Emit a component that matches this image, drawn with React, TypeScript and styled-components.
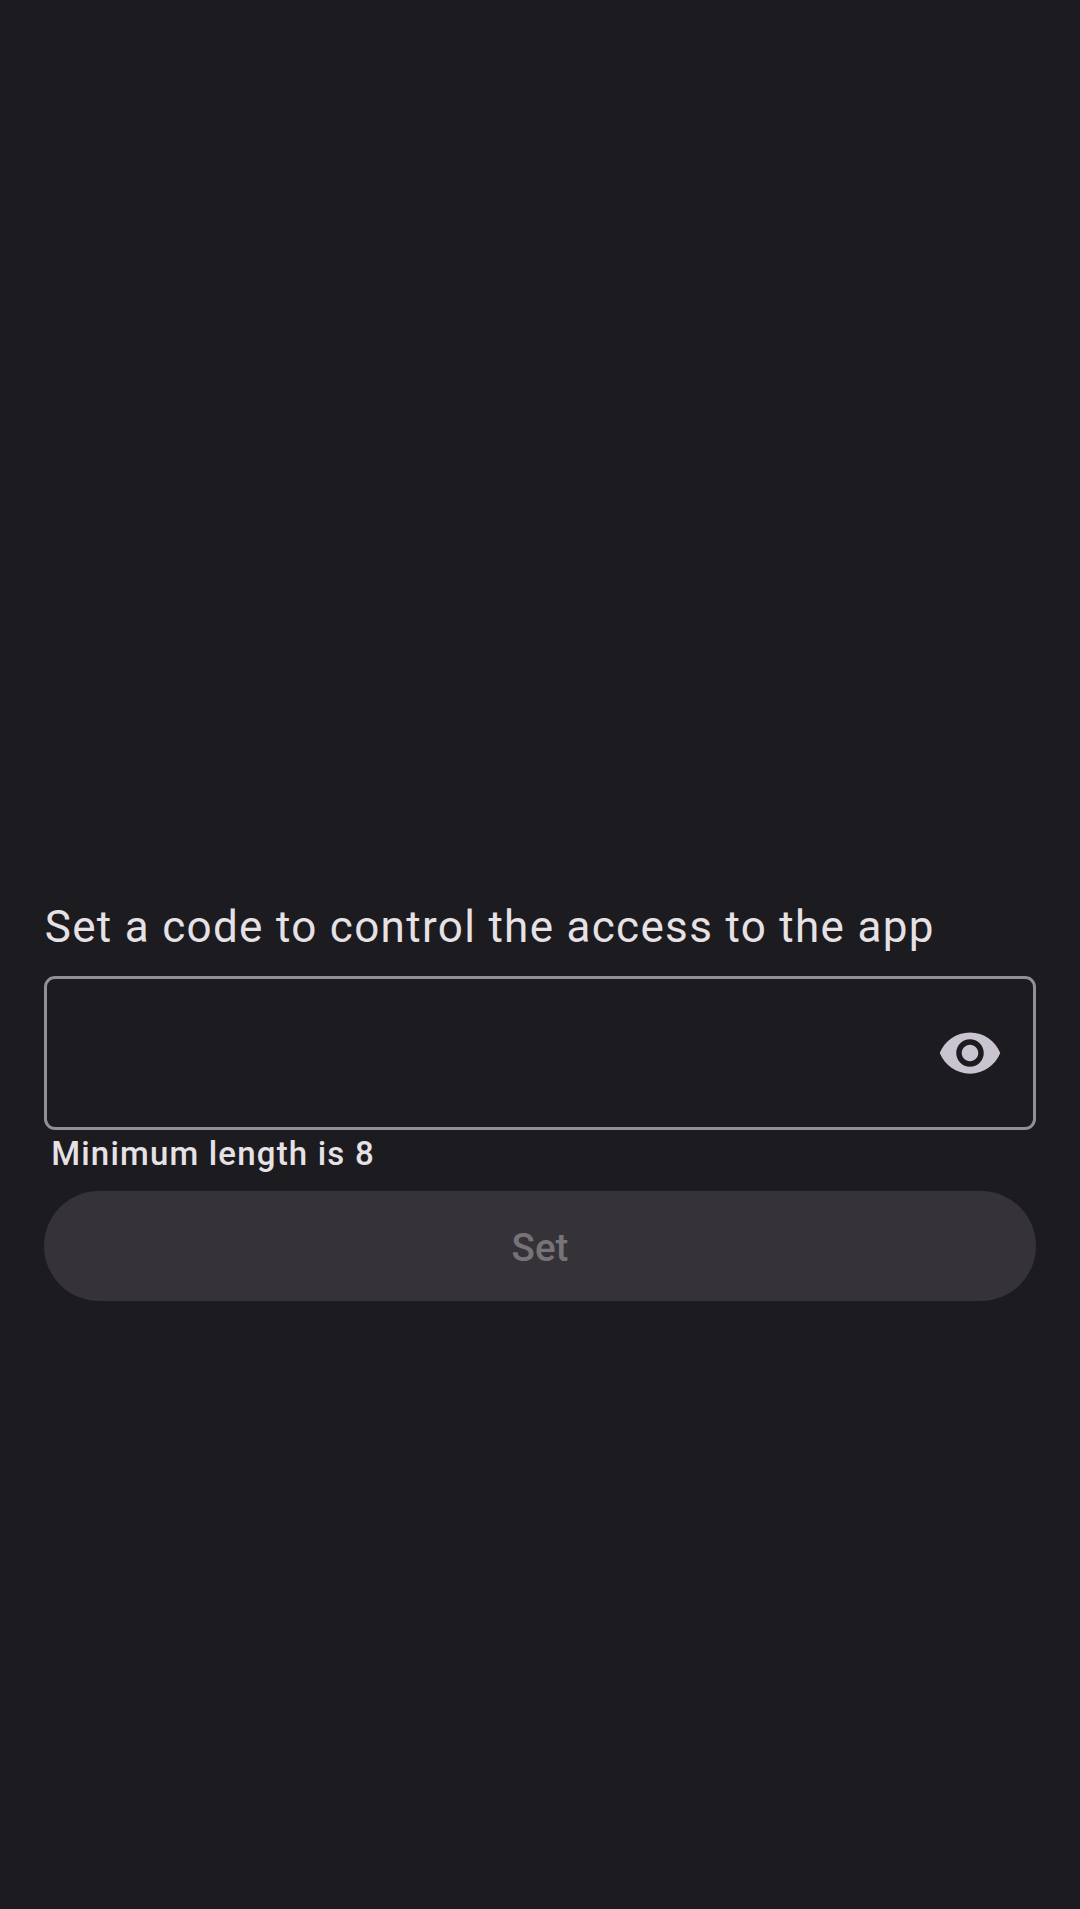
import React, { useState } from "react";
import styled, { createGlobalStyle } from "styled-components";

const GlobalStyle = createGlobalStyle`
  * { box-sizing: border-box; }
  body { margin: 0; background: #1c1b1f; }
`;

const Screen = styled.main`
  min-height: 1909px;
  padding: 900px 44px 0;
  display: flex;
  flex-direction: column;
  background: #1c1b1f;
  color: #e6e1e5;
  font-family: Roboto, sans-serif;
`;

const Title = styled.label`
  height: 76px;
  padding-left: 0.7px;
  font-size: 44px;
  line-height: 54px;
  letter-spacing: 1.315px;
  white-space: nowrap;
`;

const Field = styled.div`
  display: flex;
  align-items: center;
  height: 154px;
  padding-right: 30px;
  border: 3px solid #938f99;
  border-radius: 11px;
`;

const Input = styled.input`
  flex: 1;
  min-width: 0;
  height: 100%;
  padding: 0 41px;
  border: 0;
  outline: 0;
  background: transparent;
  color: inherit;
  font: 400 44px Roboto, sans-serif;
`;

const Toggle = styled.button`
  display: flex;
  padding: 0;
  border: 0;
  background: none;
  color: #cac4d0;
`;

const Hint = styled.p`
  height: 61px;
  margin: 0;
  padding: 2px 0 0 7.2px;
  font-size: 33px;
  font-weight: 500;
  line-height: 44px;
  letter-spacing: 1.185px;
`;

const SubmitButton = styled.button`
  height: 110px;
  padding: 2px 0 0;
  border: 0;
  border-radius: 55px;
  background: #353337;
  color: #777479;
  font: 500 38.5px Roboto, sans-serif;
  letter-spacing: 0;
`;

export default function App() {
  const [visible, setVisible] = useState(false);
  return (
    <>
      <GlobalStyle />
      <Screen>
        <Title htmlFor="code">Set a code to control the access to the app</Title>
        <Field>
          <Input id="code" type={visible ? "text" : "password"} />
          <Toggle type="button" onClick={() => setVisible(!visible)}>
            <svg width="66" height="66" viewBox="0 0 24 24" fill="currentColor">
              <path d="M12 4.5C7 4.5 2.73 7.61 1 12c1.73 4.39 6 7.5 11 7.5s9.27-3.11 11-7.5c-1.73-4.39-6-7.5-11-7.5zM12 17c-2.76 0-5-2.24-5-5s2.24-5 5-5 5 2.24 5 5-2.24 5-5 5zm0-8c-1.66 0-3 1.34-3 3s1.34 3 3 3 3-1.34 3-3-1.34-3-3-3z" />
            </svg>
          </Toggle>
        </Field>
        <Hint>Minimum length is 8</Hint>
        <SubmitButton type="button" disabled>Set</SubmitButton>
      </Screen>
    </>
  );
}
